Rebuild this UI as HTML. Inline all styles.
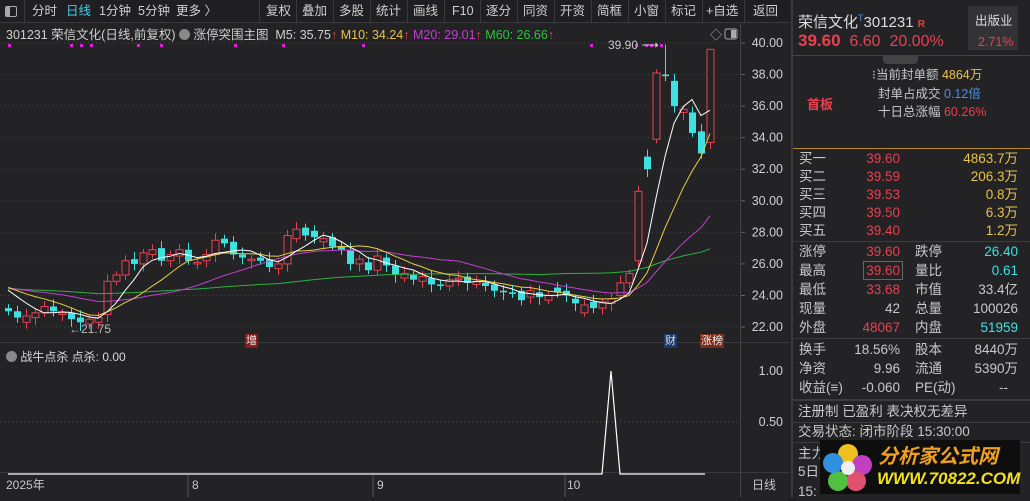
<!DOCTYPE html>
<html><head><meta charset="utf-8"><style>
*{margin:0;padding:0;box-sizing:border-box}
body{width:1030px;height:497px;background:#232326;overflow:hidden;position:relative;font-family:"Liberation Sans","Noto Sans CJK SC",sans-serif;color:#c8c8c8;font-size:12px}
.a{position:absolute;white-space:nowrap;line-height:16px}
.tb{position:absolute;left:0;top:0;width:790px;height:23px;background:#1f1f22;border-bottom:1px solid #3a3a3e}
.tb span{position:absolute;top:4px;font-size:12.5px;color:#cfcfcf;line-height:15px}
.sep{position:absolute;top:0;width:1px;height:23px;background:#3a3a3e}
.rp{position:absolute;left:791px;top:0;width:239px;height:497px;background:#232326;border-left:2px solid #3a3a3e}
.r{color:#e8404f}.y{color:#e6c14b}.c{color:#3fe0e0}.b{color:#4a90e2}.w{color:#d0d0d0}
.hl{position:absolute;left:0;width:239px;height:1px;background:#3c3c40}
.rp .a{font-size:13.5px;line-height:18px}
</style></head><body>
<div class="tb">
<div style="position:absolute;left:5px;top:6px;width:12px;height:11px;border:1px solid #aaa;border-radius:2px"><div style="width:4px;height:9px;background:#aaa"></div></div>
<div class="sep" style="left:24px"></div>
<span style="left:32px">分时</span><span style="left:66px;color:#3fd0e6">日线</span><span style="left:99px">1分钟</span><span style="left:138px">5分钟</span><span style="left:176px">更多 〉</span>
<div class="sep" style="left:259px"></div><span style="left:266px">复权</span>
<div class="sep" style="left:296px"></div><span style="left:302px">叠加</span>
<div class="sep" style="left:333px"></div><span style="left:339px">多股</span>
<div class="sep" style="left:370px"></div><span style="left:376px">统计</span>
<div class="sep" style="left:407px"></div><span style="left:413px">画线</span>
<div class="sep" style="left:444px"></div><span style="left:452px">F10</span>
<div class="sep" style="left:480px"></div><span style="left:486px">逐分</span>
<div class="sep" style="left:517px"></div><span style="left:523px">同资</span>
<div class="sep" style="left:554px"></div><span style="left:560px">开资</span>
<div class="sep" style="left:591px"></div><span style="left:597px">简框</span>
<div class="sep" style="left:628px"></div><span style="left:634px">小窗</span>
<div class="sep" style="left:665px"></div><span style="left:671px">标记</span>
<div class="sep" style="left:702px"></div><span style="left:706px">+自选</span>
<div class="sep" style="left:744px"></div><span style="left:753px">返回</span>
</div>
<div class="a" style="left:6px;top:27px;font-size:12.5px;color:#cfcfcf">301231 荣信文化(日线,前复权) <span style="display:inline-block;width:11px;height:11px;border-radius:50%;background:#888;vertical-align:-1px"></span> 涨停突围主图 &nbsp;M5: 35.75<span class="r">↑</span> <span class="y">M10: 34.24</span><span class="r">↑</span> <span style="color:#c040d0">M20: 29.01</span><span class="r">↑</span> <span style="color:#30c040">M60: 26.66</span><span class="r">↑</span></div>
<svg id="ch" class="a" style="left:0;top:23px" width="790" height="474"></svg>
<div class="a" style="left:6px;top:349px;font-size:12px;color:#d8d8d8"><span style="display:inline-block;width:11px;height:11px;border-radius:50%;background:#888;vertical-align:-1px"></span> 战牛点杀 点杀: 0.00</div>
<div class="a" style="left:6px;top:477px;font-size:12px">2025年</div>
<div class="a" style="left:192px;top:477px;font-size:12px">8</div>
<div class="a" style="left:377px;top:477px;font-size:12px">9</div>
<div class="a" style="left:567px;top:477px;font-size:12px">10</div>
<div class="a" style="left:752px;top:477px;font-size:12px">日线</div>
<div class="a" style="left:608px;top:37px;font-size:12px">39.90 ⟶</div>
<div class="a" style="left:69px;top:321px;font-size:12px;color:#bbb">←21.75</div>
<div class="a" style="left:245px;top:334px;font-size:11px;line-height:14px;background:#8a1a1a;color:#eee;padding:0 1px">增</div>
<div class="a" style="left:664px;top:334px;font-size:11px;line-height:14px;background:#1a3a6a;color:#ddd;padding:0 1px">财</div>
<div class="a" style="left:700px;top:334px;font-size:11px;line-height:14px;background:#7a2a1a;color:#eee;padding:0 1px">涨榜</div>
<div class="rp">
<div class="a" style="left:5px;top:9px;font-size:15px;color:#ddd">荣信文化<sup style="font-size:9px;color:#4a90e2">T</sup>301231 <span class="r" style="font-size:10px;font-weight:bold">R</span></div>
<div class="a r" style="left:5px;top:32px;font-size:16px"><b style="font-size:17px">39.60</b> &nbsp;6.60 &nbsp;20.00%</div>
<div class="a" style="left:175px;top:6px;width:50px;height:44px;background:#333336"></div>
<div class="a" style="left:182px;top:12px;font-size:12.5px;color:#ddd">出版业</div>
<div class="a r" style="left:185px;top:33px;font-size:12.5px">2.71%</div>
<div class="hl" style="top:55px;background:#444"></div>
<div class="a" style="left:90px;top:56px;width:35px;height:8px;background:#444;border-radius:0 0 4px 4px"></div>
<div class="a" style="left:79px;top:66px;font-size:12.5px">⁝当前封单额 <span class="y">4864万</span></div>
<div class="a" style="left:85px;top:85px;font-size:12.5px">封单占成交 <span class="b">0.12倍</span></div>
<div class="a" style="left:85px;top:103px;font-size:12.5px">十日总涨幅 <span class="r">60.26%</span></div>
<div class="a r" style="left:14px;top:96px;font-size:13px;font-weight:bold">首板</div>
<div class="hl" style="top:148px;background:#b8862e"></div>
<div class="a" style="left:6px;top:150px">买一</div><div class="a r" style="right:130px;top:150px">39.60</div><div class="a y" style="right:12px;top:150px">4863.7万</div>
<div class="a" style="left:6px;top:168px">买二</div><div class="a r" style="right:130px;top:168px">39.59</div><div class="a y" style="right:12px;top:168px">206.3万</div>
<div class="a" style="left:6px;top:186px">买三</div><div class="a r" style="right:130px;top:186px">39.53</div><div class="a y" style="right:12px;top:186px">0.8万</div>
<div class="a" style="left:6px;top:204px">买四</div><div class="a r" style="right:130px;top:204px">39.50</div><div class="a y" style="right:12px;top:204px">6.3万</div>
<div class="a" style="left:6px;top:222px">买五</div><div class="a r" style="right:130px;top:222px">39.40</div><div class="a y" style="right:12px;top:222px">1.2万</div>
<div class="hl" style="top:241px"></div>
<div class="a" style="left:6px;top:243px">涨停</div><div class="a r" style="right:130px;top:243px">39.60</div><div class="a" style="left:122px;top:243px">跌停</div><div class="a c" style="right:12px;top:243px">26.40</div>
<div class="a" style="left:6px;top:262px">最高</div><div class="a r" style="right:127px;top:261px;border:1px solid #666;padding:0 2px;line-height:17px">39.60</div><div class="a" style="left:122px;top:262px">量比</div><div class="a c" style="right:12px;top:262px">0.61</div>
<div class="a" style="left:6px;top:281px">最低</div><div class="a r" style="right:130px;top:281px">33.68</div><div class="a" style="left:122px;top:281px">市值</div><div class="a" style="right:12px;top:281px">33.4亿</div>
<div class="a" style="left:6px;top:300px">现量</div><div class="a" style="right:130px;top:300px">42</div><div class="a" style="left:122px;top:300px">总量</div><div class="a" style="right:12px;top:300px">100026</div>
<div class="a" style="left:6px;top:319px">外盘</div><div class="a r" style="right:130px;top:319px">48067</div><div class="a" style="left:122px;top:319px">内盘</div><div class="a c" style="right:12px;top:319px">51959</div>
<div class="hl" style="top:338px"></div>
<div class="a" style="left:6px;top:341px">换手</div><div class="a" style="right:130px;top:341px">18.56%</div><div class="a" style="left:122px;top:341px">股本</div><div class="a" style="right:12px;top:341px">8440万</div>
<div class="a" style="left:6px;top:360px">净资</div><div class="a" style="right:130px;top:360px">9.96</div><div class="a" style="left:122px;top:360px">流通</div><div class="a" style="right:12px;top:360px">5390万</div>
<div class="a" style="left:6px;top:379px">收益(≡)</div><div class="a" style="right:130px;top:379px">-0.060</div><div class="a" style="left:122px;top:379px">PE(动)</div><div class="a" style="right:22px;top:379px">--</div>
<div class="hl" style="top:399px;height:2px"></div>
<div class="a" style="left:5px;top:403px">注册制 已盈利 表决权无差异</div>
<div class="hl" style="top:422px"></div>
<div class="a" style="left:5px;top:423px">交易状态: 闭市阶段 15:30:00</div>
<div class="hl" style="top:442px"></div>
<div class="a" style="left:5px;top:445px">主力</div>
<div class="a" style="left:5px;top:463px">5日</div>
<div class="a" style="left:5px;top:483px">15:</div>
</div>
<div class="a" style="left:820px;top:440px;width:200px;height:54px;background:#0e0e0e"></div>
<svg class="a" style="left:822px;top:441px" width="52" height="52">
<circle cx="26" cy="13" r="10" fill="#f0c020"/><circle cx="40" cy="24" r="10" fill="#c040c0"/><circle cx="34" cy="40" r="10" fill="#e05070"/><circle cx="16" cy="40" r="10" fill="#50c040"/><circle cx="11" cy="22" r="10" fill="#3090e0"/><circle cx="26" cy="27" r="7" fill="#eee"/></svg>
<div class="a" style="left:878px;top:446px;font-size:20px;line-height:22px;font-weight:bold;color:#f0a020;font-style:italic">分析家公式网</div>
<div class="a" style="left:877px;top:469px;font-size:17px;line-height:20px;font-weight:bold;color:#f0e020;font-style:italic;font-family:'Liberation Sans',sans-serif">WWW.70822.COM</div>
<script>
var C=[23.0,22.6,22.7,22.9,23.3,23.0,22.9,22.5,22.3,22.5,22.6,24.9,25.3,26.2,26.0,26.7,26.9,26.2,26.6,26.9,26.2,26.1,26.6,27.5,27.3,26.6,26.4,26.3,26.2,25.8,26.0,27.8,28.2,27.8,27.7,27.6,27.1,26.9,26.0,26.3,25.6,26.5,25.9,25.3,25.4,25.0,25.2,24.7,24.6,25.0,25.1,24.8,24.9,24.6,24.3,24.2,24.1,23.7,24.3,23.9,24.0,24.2,24.0,23.5,23.4,23.2,23.6,23.8,24.8,25.4,30.6,32.0,38.1,37.9,36.0,35.8,34.3,33.0,39.6];
var O=[23.2,23.0,22.3,22.6,22.9,23.3,22.8,22.9,22.6,22.2,22.3,22.8,24.9,25.3,26.3,26.0,26.6,27.0,26.2,26.5,26.9,26.0,26.2,26.6,27.6,27.4,26.6,26.2,26.4,26.3,25.7,26.0,27.6,28.3,28.1,27.4,27.7,27.1,26.9,26.0,26.1,25.6,26.4,25.9,25.1,25.3,24.9,25.1,24.7,24.6,25.0,25.2,24.7,24.8,24.7,24.3,24.2,24.3,23.9,24.2,23.7,24.5,24.3,23.8,22.9,23.6,23.2,23.5,24.0,24.8,26.2,32.8,33.9,38.0,37.6,35.6,35.6,34.4,33.7];
var n=C.length,W=790,s='';
function Y(p){return 20+(40-p)*15.78}
for(var p=22;p<=40;p+=2){var y=Y(p);s+='<line x1="0" x2="740" y1="'+y+'" y2="'+y+'" stroke="#444" stroke-dasharray="1,3"/><line x1="740" x2="745" y1="'+y+'" y2="'+y+'" stroke="#666"/><text x="783" y="'+(y+4)+'" fill="#d0d0d0" font-size="12.5" text-anchor="end">'+p.toFixed(2)+'</text>';}
s+='<line x1="740.5" x2="740.5" y1="0" y2="474" stroke="#444"/>';
s+='<line x1="0" x2="790" y1="319.5" y2="319.5" stroke="#3a3a3e"/><line x1="0" x2="790" y1="449.5" y2="449.5" stroke="#3a3a3e"/>';
var full=[];for(var i=0;i<60;i++)full.push(24.4+Math.sin(i/7)*0.3);full=full.concat(C);
function ma(k,col){var d='';for(var i=0;i<n;i++){var j=i+60,t=0;for(var m=0;m<k;m++)t+=full[j-m];var x=8+9*i;d+=(i?'L':'M')+x+','+Y(t/k).toFixed(1);}s+='<path d="'+d+'" fill="none" stroke="'+col+'" stroke-width="1"/>';}
for(var i=0;i<n;i++){var x=8+9*i,c=C[i],o=O[i],up=c>=o,h=Math.max(c,o)+0.25+(i%3)*0.1,l=Math.min(c,o)-0.25-(i%4)*0.08;if(i==8)l=21.75;if(i==73)h=39.9;if(i==78)h=39.6;var col=up?'#e8404f':'#3fe0e0';
s+='<line x1="'+(x+.5)+'" x2="'+(x+.5)+'" y1="'+Y(h)+'" y2="'+Y(l)+'" stroke="'+col+'"/>';
var t=Y(Math.max(c,o)),hh=Math.max(1,Y(Math.min(c,o))-t);
if(up)s+='<rect x="'+(x-3)+'" y="'+t+'" width="7" height="'+hh+'" fill="#232326" stroke="'+col+'"/>';else s+='<rect x="'+(x-3)+'" y="'+t+'" width="7" height="'+hh+'" fill="'+col+'"/>';}
ma(60,'#30b040');ma(20,'#c040d0');ma(10,'#e6d040');ma(5,'#ffffff');
[8,70,80,90,137,160,234,282,362,590,635,645,650,655,660].forEach(function(x){s+='<rect x="'+x+'" y="21" width="3" height="3" fill="#e020e0"/>'});
s+='<text x="710" y="16" fill="#aaa" font-size="12">◇</text><rect x="725" y="6" width="12" height="10" rx="2" fill="none" stroke="#aaa"/><rect x="731" y="7" width="5" height="8" fill="#aaa"/>';
var b=451,y1=348,y5=399;
s+='<line x1="0" x2="740" y1="'+y5+'" y2="'+y5+'" stroke="#555" stroke-dasharray="1,3"/>';
s+='<text x="783" y="'+(y1+4)+'" fill="#d0d0d0" font-size="12.5" text-anchor="end">1.00</text><text x="783" y="'+(y5+4)+'" fill="#d0d0d0" font-size="12.5" text-anchor="end">0.50</text>';
s+='<path d="M8,'+b+'L602,'+b+'L611,'+y1+'L620,'+b+'L705,'+b+'" fill="none" stroke="#fff" stroke-width="1.2"/>';
[188,373,565].forEach(function(x){s+='<line x1="'+x+'" x2="'+x+'" y1="452" y2="474" stroke="#555"/>'});
document.getElementById('ch').innerHTML=s;
</script>
</body></html>
